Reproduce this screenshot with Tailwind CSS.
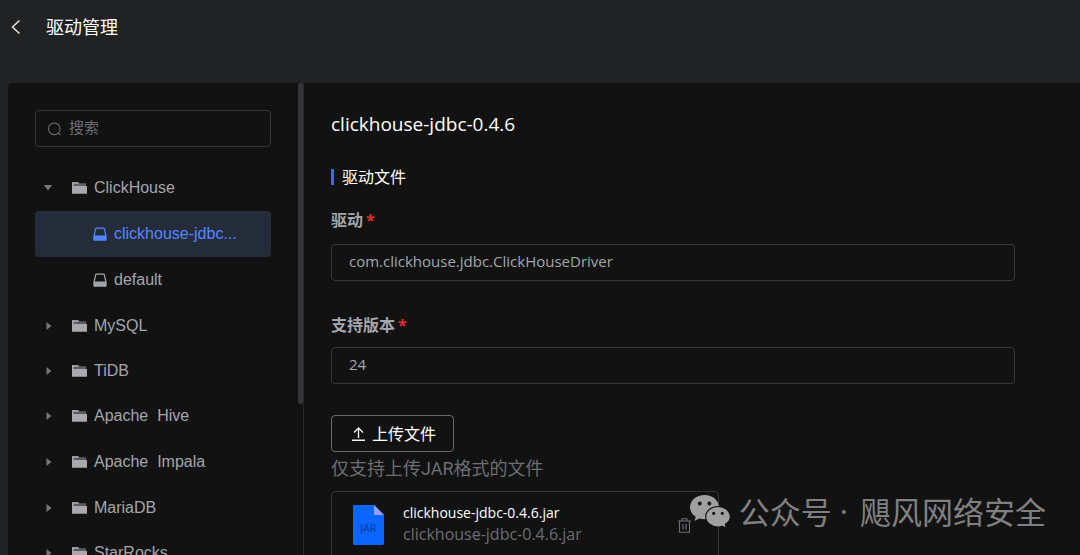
<!DOCTYPE html>
<html lang="zh-CN">
<head>
<meta charset="utf-8">
<title>驱动管理</title>
<script src="https://cdn.jsdelivr.net/npm/@tailwindcss/browser@4"></script>
</head>
<body class="flex h-screen flex-col overflow-hidden bg-[#212224] font-['Open_Sans','Noto_Sans_CJK_SC',sans-serif] text-white">
<svg class="hidden">
  <symbol id="folder" viewBox="0 0 15 12"><path d="M0 .3h6.2l.9 1.2H14V4H0z" fill="#8b8b8f"/><path d="M0 .3h6.2l.9 1.2H1.500V4H0z" fill="#a9a9ad"/><path d="M1.600 3h12.600" stroke="#3c3c40" stroke-width="1.200"/><path d="M0 3.900h15V11.200a.6.600 0 0 1-.6.600H.6a.6.600 0 0 1-.6-.6z" fill="#a9a9ad"/></symbol>
  <symbol id="drive" viewBox="0 0 14 14"><path d="M2.900 1.200h8.200L12.800 8v4.800H1.200V8z" fill="none" stroke="currentColor" stroke-width="1.200" stroke-linejoin="round"/><path d="M.6 8.400h12.800v4.400a.6.600 0 0 1-.6.600H1.200a.6.600 0 0 1-.6-.6z" fill="currentColor"/></symbol>
  <symbol id="right" viewBox="0 0 6 8"><path d="M.5 0 5.500 4l-5 4z" fill="#73777d"/></symbol>
</svg>

<header class="flex h-[83px] shrink-0 items-start gap-6 pt-[11px] pl-2.5">
  <button type="button" aria-label="返回" class="mt-1 flex h-6 w-3 items-center justify-center">
    <svg class="h-4 w-3" viewBox="0 0 12 16" fill="none" stroke="#e5e5e5" stroke-width="1.5"><path d="M9.500 1.500 2.500 8l7 6.500"/></svg>
  </button>
  <h1 class="text-lg leading-8">驱动管理</h1>
</header>

<div class="flex min-h-0 flex-1 pl-2">
  <aside class="relative w-[296px] shrink-0 overflow-hidden rounded-tl-sm border-r border-[#2b2b2d] bg-[#121212] pt-[27px] pr-8 pl-[27px] font-['Liberation_Sans','Noto_Sans_CJK_SC',sans-serif] text-[#a3a6ad]">
    <label class="flex h-[37px] items-center gap-1.5 rounded border border-[#37373a] px-[11px]">
      <svg class="size-4 shrink-0" viewBox="0 0 16 16" fill="none" stroke="#6c6e72" stroke-width="1.100"><circle cx="7.300" cy="7.800" r="5.800"/><path d="m11.300 12 2.200 1.900"/></svg>
      <input type="search" aria-label="搜索" placeholder="搜索" class="w-full min-w-0 bg-transparent text-[15px] outline-none placeholder:text-[#6c6e72]">
    </label>
    <ul class="mt-[18px] text-base">
      <li>
        <button type="button" class="flex h-[46px] w-full items-center gap-[7px] pl-2">
          <svg class="mr-3 h-1.5 w-2.5" viewBox="0 0 10 6"><path d="M.8 0h8.400L5 5.500z" fill="#73777d"/></svg>
          <svg class="h-3 w-[15px]"><use href="#folder"/></svg>ClickHouse
        </button>
        <ul>
          <li><button type="button" class="flex h-[46px] w-full items-center gap-[7px] rounded bg-[#242c3a] pl-[58px] text-[#5485ff]"><svg class="size-3.5"><use href="#drive"/></svg>clickhouse-jdbc...</button></li>
          <li><button type="button" class="flex h-[46px] w-full items-center gap-[7px] pl-[58px]"><svg class="size-3.5"><use href="#drive"/></svg>default</button></li>
        </ul>
      </li>
      <li><button type="button" class="flex h-[45px] w-full items-center gap-[7px] pl-[11px]"><svg class="mr-[13px] h-2 w-1.5"><use href="#right"/></svg><svg class="h-3 w-[15px]"><use href="#folder"/></svg>MySQL</button></li>
      <li><button type="button" class="flex h-[45px] w-full items-center gap-[7px] pl-[11px]"><svg class="mr-[13px] h-2 w-1.5"><use href="#right"/></svg><svg class="h-3 w-[15px]"><use href="#folder"/></svg>TiDB</button></li>
      <li><button type="button" class="flex h-[46px] w-full items-center gap-[7px] pl-[11px]"><svg class="mr-[13px] h-2 w-1.5"><use href="#right"/></svg><svg class="h-3 w-[15px]"><use href="#folder"/></svg><span class="whitespace-pre">Apache  Hive</span></button></li>
      <li><button type="button" class="flex h-[46px] w-full items-center gap-[7px] pl-[11px]"><svg class="mr-[13px] h-2 w-1.5"><use href="#right"/></svg><svg class="h-3 w-[15px]"><use href="#folder"/></svg><span class="whitespace-pre">Apache  Impala</span></button></li>
      <li><button type="button" class="flex h-[45px] w-full items-center gap-[7px] pl-[11px]"><svg class="mr-[13px] h-2 w-1.5"><use href="#right"/></svg><svg class="h-3 w-[15px]"><use href="#folder"/></svg>MariaDB</button></li>
      <li><button type="button" class="flex h-[45px] w-full items-center gap-[7px] pl-[11px]"><svg class="mr-[13px] h-2 w-1.5"><use href="#right"/></svg><svg class="h-3 w-[15px]"><use href="#folder"/></svg>StarRocks</button></li>
    </ul>
    <div class="absolute top-0 right-0 h-[321px] w-[5px] rounded-full bg-[#36363d]"></div>
  </aside>

  <main class="min-w-0 flex-1 overflow-hidden bg-[#121212] pt-[25px] pr-[65px] pl-[27px]">
    <h2 class="text-[19px] leading-8">clickhouse-jdbc-0.4.6</h2>
    <h3 class="mt-[29px] flex items-center gap-2 text-base leading-4"><span class="h-4 w-[3px] bg-[#2f6bff]"></span>驱动文件</h3>
    <form>
      <label for="driver" class="mt-[23px] block text-base leading-6 font-bold text-[#a3a6ad]">驱动<span class="ml-[3px] text-[#e02d2d]">*</span></label>
      <input id="driver" value="com.clickhouse.jdbc.ClickHouseDriver" class="mt-3 block h-[37px] w-full rounded border border-[#37373a] bg-transparent px-[17px] pb-[3px] text-[15px] text-[#a3a6ad] outline-none">
      <label for="version" class="mt-8 block text-base leading-6 font-bold text-[#a3a6ad]">支持版本<span class="ml-[3px] text-[#e02d2d]">*</span></label>
      <input id="version" value="24" class="mt-2.5 block h-[37px] w-full rounded border border-[#37373a] bg-transparent px-[17px] pb-[3px] text-[15px] text-[#a3a6ad] outline-none">
      <button type="button" class="mt-[31px] flex h-[37px] items-center gap-[5px] rounded border border-[#6a6a6a] px-[17px] text-base">
        <svg class="h-4 w-[18px]" viewBox="0 0 18 16" fill="none" stroke="#f0f0f0" stroke-width="1.400"><path d="M3 14.300h13M9.500 12V2.200M5 6.500l4.500-4.400L14 6.500"/></svg>上传文件
      </button>
      <p class="mt-[3px] font-[Roboto,'Noto_Sans_CJK_SC',sans-serif] text-lg leading-7 text-[#6c6e72]">仅支持上传JAR格式的文件</p>
    </form>
    <div class="mt-2 flex h-20 w-[388px] items-start rounded border border-[#37373a] px-[21px] pt-3">
      <svg class="mt-px h-10 w-8 shrink-0" viewBox="0 0 32 40"><path d="M1 0h20l10 10v28.500a1.500 1.500 0 0 1-1.500 1.500h-28A1.500 1.500 0 0 1 0 38.500V1a1 1 0 0 1 1-1z" fill="#0a66ff"/><path d="M21 0l10 10H21z" fill="#95a0ff"/><text x="15.500" y="27" text-anchor="middle" font-family="DejaVu Sans" font-size="10" fill="#073f94">JAR</text></svg>
      <div class="ml-[18px] flex-1">
        <p class="text-sm leading-[18px]">clickhouse-jdbc-0.4.6.jar</p>
        <p class="text-base leading-6 text-[#6c6e72]">clickhouse-jdbc-0.4.6.jar</p>
      </div>
      <button type="button" aria-label="删除" class="mt-3.5 mr-1.5">
        <svg class="h-[15px] w-[13px]" viewBox="0 0 13 15" fill="none" stroke="#6c7078" stroke-width="1.100"><path d="M0 3h13M4 3V.8h5V3M1.500 3v11.300h10V3M5 6v5.500M8 6v5.500"/></svg>
      </button>
    </div>
  </main>
</div>

<div class="absolute right-[34px] bottom-6 flex items-center gap-2 text-[#808080]">
  <svg class="h-[33px] w-[41px]" viewBox="0 0 41 33">
    <path d="M14.500 0C6.500 0 0 5.400 0 12.200c0 4 2.200 7.300 5.700 9.500L4.500 26l4.900-2.600c1.600.5 3.300.8 5.100.8 8 0 14.500-5.300 14.500-12S22.500 0 14.500 0z" fill="#a0a0a0"/>
    <path d="M28 11.500c-6.800 0-12.300 4.600-12.300 10.300S21.200 32 28 32c1.500 0 3-.2 4.300-.6l3.900 1.600-.8-3.700c3-1.900 4.900-4.500 4.900-7.500 0-5.700-5.500-10.300-12.300-10.300z" fill="#a0a0a0" stroke="#121212" stroke-width="1.100"/>
    <g fill="#121212"><circle cx="9.800" cy="8.500" r="1.900"/><circle cx="19.400" cy="8.500" r="1.900"/><circle cx="23.700" cy="18.300" r="1.600"/><circle cx="32.300" cy="18.300" r="1.600"/></g>
  </svg>
  <p class="flex font-['Noto_Sans_CJK_SC',sans-serif] text-[31px] leading-10 font-normal"><span>公众号</span><span class="pr-3 pl-2 font-['Open_Sans',sans-serif]">·</span><span>飓风网络安全</span></p>
</div>
</body>
</html>
